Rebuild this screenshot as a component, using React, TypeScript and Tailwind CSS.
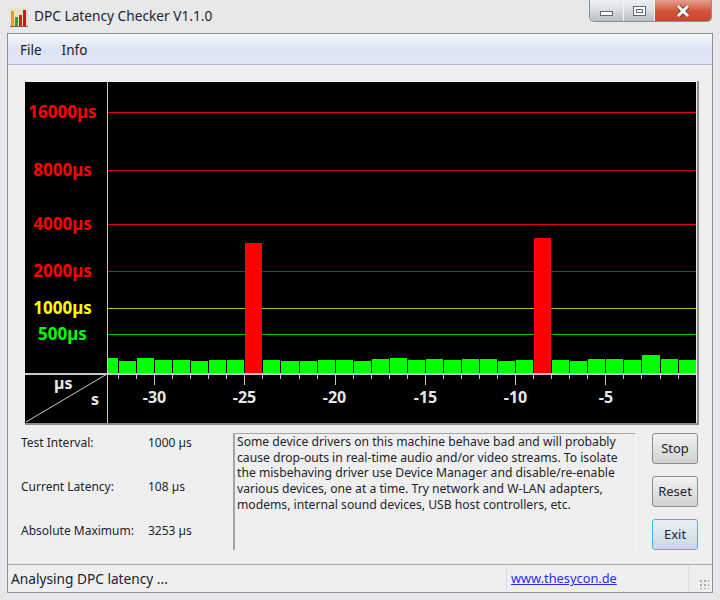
const GRID = [
  { y: 112, color: '#e00000', label: '16000µs', labelY: 118, labelColor: '#ff0000' },
  { y: 170, color: '#e00000', label: '8000µs', labelY: 176, labelColor: '#ff0000' },
  { y: 224, color: '#e00000', label: '4000µs', labelY: 230, labelColor: '#ff0000' },
  { y: 271, color: '#d00000', label: '2000µs', labelY: 277, labelColor: '#ff0000' },
  { y: 308, color: '#c0c000', label: '1000µs', labelY: 314, labelColor: '#ffff00' },
  { y: 334, color: '#00c800', label: '500µs', labelY: 340, labelColor: '#00ff00' },
];

// top edge of each bar, oldest first (y in page pixels)
const BARS = [
  358, 361, 358, 360, 360, 361, 360, 360, 243, 360, 361, 361, 360, 360, 361, 359, 358, 360, 359, 360, 359, 359,
  361, 360, 238, 360, 361, 359, 359, 360, 355, 359, 360,
];

const AXIS = [
  { x: 154.5, label: '-30' },
  { x: 244.5, label: '-25' },
  { x: 334.5, label: '-20' },
  { x: 425.5, label: '-15' },
  { x: 515.5, label: '-10' },
  { x: 606, label: '-5' },
];

function Chart() {
  return (
    <svg viewBox="25 81 674 344" width={674} height={344} className="block font-['Liberation_Sans',Arial,sans-serif]">
      <rect x={25} y={81} width={674} height={344} fill="#efefef" />
      <rect x={25} y={82} width={671} height={341} fill="#000" />
      <rect x={697} y={79} width={2} height={345} fill="#8c8c8c" />
      <rect x={25} y={423} width={674} height={2} fill="#8c8c8c" />

      {GRID.map((g) => (
        <g key={g.label}>
          <rect x={108} y={g.y} width={588} height={1} fill={g.color} />
          <text
            x={62.5}
            y={g.labelY}
            textAnchor="middle"
            fontSize={17}
            fontWeight={700}
            fill={g.labelColor}
          >
            {g.label}
          </text>
        </g>
      ))}

      {BARS.map((top, i) => {
        const left = i === 0 ? 108 : Math.round(119 + (i - 1) * 18.05);
        const right = Math.round(118 + i * 18.05);
        return (
          <rect
            key={i}
            x={left}
            y={top}
            width={Math.min(right, 696) - left}
            height={373 - top}
            fill={top < 300 ? '#ff0000' : '#00ff00'}
          />
        );
      })}

      {/* axes */}
      <rect x={107} y={82} width={1} height={341} fill="#c8c8c8" />
      <rect x={25} y={373} width={671} height={2} fill="#c8c8c8" />
      <line x1={26} y1={422} x2={107} y2={374} stroke="#c8c8c8" strokeWidth={1} />

      {BARS.map((_, i) => {
        const x = Math.round(118 + i * 18.05);
        const big = i % 5 === 2;
        return x < 690 ? <rect key={i} x={x} y={375} width={1} height={big ? 10 : 4} fill="#c8c8c8" /> : null;
      })}

      <text x={54} y={389} fontSize={16} fontWeight={700} fill="#e8e8e8">
        µs
      </text>
      <text x={91} y={405} fontSize={16} fontWeight={700} fill="#e8e8e8">
        s
      </text>
      {AXIS.map((a) => (
        <text key={a.label} x={a.x} y={403} textAnchor="middle" fontSize={16} fontWeight={700} fill="#e8e8e8">
          {a.label}
        </text>
      ))}
    </svg>
  );
}

function TitleBar() {
  return (
    <div className="flex h-[33px] shrink-0 items-start">
      <svg width={18} height={19} viewBox="0 0 18 19" className="ml-[10px] mt-[8px] shrink-0">
        <rect x={0} y={0} width={18} height={19} fill="#e9d9a8" opacity={0.5} />
        <rect x={1} y={3} width={3} height={15} fill="#e0a020" />
        <rect x={5} y={9} width={3} height={9} fill="#30a030" />
        <rect x={9} y={7} width={3} height={11} fill="#d02020" />
        <rect x={13} y={2} width={3} height={16} fill="#c81818" />
        <rect x={0} y={18} width={18} height={1} fill="#806040" />
      </svg>
      <span className="ml-[6px] mt-[6px] text-[13.7px] leading-[20px] text-[#1c2430]">DPC Latency Checker V1.1.0</span>
      <div className="ml-auto mr-[8px] flex h-[22px] w-[123px] overflow-hidden rounded-b-[5px] border border-t-0 border-[#8a8f98]">
        <div className="flex w-[33px] items-end justify-center bg-gradient-to-b from-[#eef0f3] via-[#d9dce1] to-[#b8bdc5] pb-[5px]">
          <div className="h-[5px] w-[13px] border border-[#5c6878] bg-white" />
        </div>
        <div className="flex w-[32px] items-center justify-center border-x border-[#f4f4f4] bg-gradient-to-b from-[#eef0f3] via-[#d9dce1] to-[#b8bdc5]">
          <div className="flex h-[10px] w-[13px] items-center justify-center border border-[#5c6878] bg-white">
            <div className="h-[4px] w-[7px] border border-[#5c6878]" />
          </div>
        </div>
        <div className="flex flex-1 items-center justify-center bg-gradient-to-b from-[#e8a090] via-[#d4563c] to-[#c8442c]">
          <svg width={14} height={12} viewBox="0 0 14 12">
            <path d="M2 1 L12 11 M12 1 L2 11" stroke="#5a2a20" strokeWidth={4.4} />
            <path d="M2 1 L12 11 M12 1 L2 11" stroke="#fff" strokeWidth={3} />
          </svg>
        </div>
      </div>
    </div>
  );
}

function MenuBar() {
  return (
    <div className="flex h-[31px] shrink-0 items-center gap-[20px] border-b border-[#b4b8cc] bg-gradient-to-b from-[#f7f9fc] via-[#dde5f5] to-[#e0e6f4] pl-[12px] pt-[3px] text-[13.5px] text-[#1a1a1a]">
      <span>File</span>
      <span>Info</span>
    </div>
  );
}

function InfoRow({ label, value }: { label: string; value: string }) {
  return (
    <div className="grid h-[20px] grid-cols-[127px_auto] items-center text-[12px] text-[#20242c]">
      <span>{label}</span>
      <span>{value}</span>
    </div>
  );
}

function Btn({ label, active }: { label: string; active?: boolean }) {
  return (
    <div
      className={`flex h-[31px] w-[46px] items-center justify-center rounded-[3px] border text-[13px] text-[#20242c] ${
        active
          ? 'border-[#3cb8e8] bg-gradient-to-b from-[#eaf2f6] to-[#c8d8e2]'
          : 'border-[#8c8c8c] bg-gradient-to-b from-[#f2f2f2] to-[#d2d2d2]'
      }`}
    >
      {label}
    </div>
  );
}

export default function App() {
  return (
    <div className="flex h-[600px] w-[720px] flex-col overflow-hidden bg-[#e6e8ea] font-['Open_Sans',sans-serif]">
      <TitleBar />
      <div className="mx-[7px] mb-[7px] flex min-h-0 flex-1 flex-col border border-[#8e9094] bg-[#efefef]">
        <MenuBar />
        <div className="flex min-h-0 flex-1 flex-col">
          <div className="pl-[17px] pt-[16px]">
            <Chart />
          </div>
          <div className="flex pt-[8px]">
            <div className="flex w-[225px] flex-col gap-[24px] pl-[13px]">
              <InfoRow label="Test Interval:" value="1000 µs" />
              <InfoRow label="Current Latency:" value="108 µs" />
              <InfoRow label="Absolute Maximum:" value="3253 µs" />
            </div>
            <div className="h-[117px] w-[403px] border-l-2 border-t border-r border-l-[#a4a4a4] border-t-[#a4a4a4] border-r-[#f8f8f8] pl-[2px] text-[12.15px] leading-[15.67px] text-[#20242c]">
              Some device drivers on this machine behave bad and will probably
              <br />
              cause drop-outs in real-time audio and/or video streams. To isolate
              <br />
              the misbehaving driver use Device Manager and disable/re-enable
              <br />
              various devices, one at a time. Try network and W-LAN adapters,
              <br />
              modems, internal sound devices, USB host controllers, etc.
            </div>
            <div className="ml-[16px] flex flex-col gap-[12px]">
              <Btn label="Stop" />
              <Btn label="Reset" />
              <Btn label="Exit" active />
            </div>
          </div>
        </div>
        <div className="flex h-[28px] shrink-0 items-center border-t border-[#a8a8a8] pt-[1px] text-[13.7px]">
          <div className="w-[498px] pl-[3px] text-[#20242c]">Analysing DPC latency ...</div>
          <div className="flex h-full w-[182px] items-center border-l border-[#dcdcdc] pl-[4px]">
            <a className="text-[12.8px] text-[#2a2aff] underline">www.thesycon.de</a>
          </div>
          <div className="relative h-full flex-1 border-l border-[#dcdcdc]">
            <span className="absolute bottom-[3px] right-[3px] h-[10px] w-[10px] bg-[radial-gradient(#a8a8a8_1px,transparent_1px)] bg-[length:4px_4px]" />
          </div>
        </div>
      </div>
    </div>
  );
}
